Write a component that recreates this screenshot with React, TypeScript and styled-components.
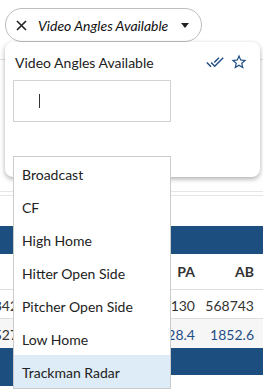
import styled, {createGlobalStyle} from "styled-components";

const GlobalStyle = createGlobalStyle`
  html, body {
    margin: 0;
    padding: 0;
    background: #fff;
  }
  body {
    font-family: Lato, "Noto Sans", sans-serif;
    color: #222;
  }
`

const navy = "#1d4e80"
const linkBlue = "#1f4e86"

const Page = styled.div`
  position: relative;
  width: 263px;
  height: 389px;
  overflow: hidden;
`

const Toolbar = styled.div`
  height: 60px;
  border-bottom: 1px solid #e3e3e3;
  padding: 8px 0 0 5px;
  box-sizing: border-box;
`

const Chip = styled.div`
  display: inline-flex;
  align-items: center;
  box-sizing: border-box;
  height: 34px;
  width: 197px;
  padding: 0 12px 0 10px;
  border: 1px solid #bdbdbd;
  border-radius: 17px;
  background: #fff;
`

const ChipLabel = styled.span`
  font-style: italic;
  font-size: 14px;
  margin-left: 11px;
  flex: 1;
  white-space: nowrap;
  color: #111;
`

const Caret = styled.span`
  width: 0;
  height: 0;
  border-left: 4px solid transparent;
  border-right: 4px solid transparent;
  border-top: 5px solid #222;
`

const DoubleRule = styled.div`
  margin-top: 131px;
  height: 3px;
  border-top: 1px solid #e6e6e6;
  border-bottom: 1px solid #e6e6e6;
`

const Table = styled.div`
  margin-top: 30px;
  margin-left: -20px;
  display: grid;
  grid-template-columns: 45px 1fr 60px 61px;
  font-size: 14px;
  color: #333;
`

const Band = styled.div<{ h: number }>`
  grid-column: 1 / -1;
  height: ${p => p.h}px;
  background: ${navy};
`

const Cell = styled.div<{ head?: boolean; shade?: boolean; link?: boolean; last?: boolean }>`
  height: ${p => (p.head ? 36 : 29)}px;
  display: flex;
  align-items: center;
  justify-content: flex-end;
  padding-right: ${p => (p.last ? 9 : 7)}px;
  padding-top: ${p => (p.head ? 0 : 2)}px;
  box-sizing: border-box;
  white-space: nowrap;
  font-weight: ${p => (p.head ? 700 : 400)};
  color: ${p => (p.link ? linkBlue : "#333")};
  background: ${p => (p.shade ? "#f6f6f6" : "transparent")};
  border-bottom: ${p => (p.shade ? "none" : "1px solid #dedede")};
`

const Tail = styled.div`
  height: 11px;
  background: ${navy};
`

const Popover = styled.div`
  position: absolute;
  top: 42px;
  left: 5px;
  width: 255px;
  height: 135px;
  box-sizing: border-box;
  padding: 11px 12px 0 8px;
  background: #fff;
  border-radius: 8px;
  box-shadow: 0 2px 5px rgba(0, 0, 0, 0.32);
  z-index: 2;
`

const PopHeader = styled.div`
  display: flex;
  align-items: center;
  height: 18px;
  padding-left: 2px;
`

const PopTitle = styled.span`
  flex: 1;
  font-size: 14px;
  color: #222;
`

const IconRow = styled.div`
  display: flex;
  gap: 6px;
`

const SearchBox = styled.div`
  margin-top: 9px;
  width: 158px;
  height: 42px;
  box-sizing: border-box;
  border: 1px solid #d2d2d2;
  padding: 13px 0 0 25px;
`

const TextCursor = styled.span`
  display: block;
  width: 1px;
  height: 14px;
  background: #333;
`

const ListBox = styled.ul`
  position: absolute;
  top: 156px;
  left: 13px;
  width: 158px;
  box-sizing: border-box;
  margin: 0;
  padding: 0;
  list-style: none;
  background: #fff;
  border: 1px solid #cbcbcb;
  z-index: 3;
`

const Option = styled.li<{ active?: boolean }>`
  height: 33px;
  display: flex;
  align-items: center;
  padding-left: 8px;
  padding-top: 1px;
  box-sizing: border-box;
  font-size: 14px;
  color: #222;
  white-space: nowrap;
  background: ${p => (p.active ? "#ddecf7" : "#fff")};
`

const CloseIcon = () =>
    <svg width="11" height="11" viewBox="0 0 11 11">
        <path d="M1 1L10 10M10 1L1 10" stroke="#222" strokeWidth="1.6" fill="none"/>
    </svg>

const DoneAllIcon = () =>
    <svg width="18" height="18" viewBox="0 0 24 24" fill={linkBlue}>
        <path d="M18 7l-1.41-1.41-6.34 6.34 1.41 1.41L18 7zm4.24-1.41L11.66 16.17 7.48 12l-1.41 1.41L11.66 19l12-12-1.42-1.41zM.41 13.41L6 19l1.41-1.41L1.830 12 .41 13.41z"/>
    </svg>

const StarIcon = () =>
    <svg width="18" height="18" viewBox="0 0 24 24" fill={linkBlue}>
        <path d="M22 9.24l-7.19-.62L12 2 9.19 8.63 2 9.24l5.46 4.730L5.82 21 12 17.27 18.18 21l-1.63-7.03L22 9.24zM12 15.4l-3.76 2.27 1-4.28-3.32-2.88 4.38-.38L12 6.1l1.71 4.04 4.38.38-3.32 2.88 1 4.28L12 15.4z"/>
    </svg>

const angles = [
    "Broadcast",
    "CF",
    "High Home",
    "Hitter Open Side",
    "Pitcher Open Side",
    "Low Home",
    "Trackman Radar",
]

const rows = [
    {first: "1342", pa: "130", ab: "568743", shade: false, link: false},
    {first: "1527", pa: "28.4", ab: "1852.6", shade: true, link: true},
]

const App = () => {
    return <Page>
        <GlobalStyle/>
        <Toolbar>
            <Chip>
                <CloseIcon/>
                <ChipLabel>Video Angles Available</ChipLabel>
                <Caret/>
            </Chip>
        </Toolbar>
        <DoubleRule/>
        <Table>
            <Band h={28}/>
            <Cell head/>
            <Cell head/>
            <Cell head>PA</Cell>
            <Cell head last>AB</Cell>
            {rows.map((r, i) => [
                <Cell key={i + "a"} shade={r.shade}>{r.first}</Cell>,
                <Cell key={i + "b"} shade={r.shade}/>,
                <Cell key={i + "c"} shade={r.shade} link={r.link}>{r.pa}</Cell>,
                <Cell key={i + "d"} shade={r.shade} link={r.link} last>{r.ab}</Cell>,
            ])}
            <Band h={27}/>
            <Tail/>
        </Table>

        <Popover>
            <PopHeader>
                <PopTitle>Video Angles Available</PopTitle>
                <IconRow>
                    <DoneAllIcon/>
                    <StarIcon/>
                </IconRow>
            </PopHeader>
            <SearchBox>
                <TextCursor/>
            </SearchBox>
        </Popover>

        <ListBox>
            {angles.map(a =>
                <Option key={a} active={a === "Trackman Radar"}>{a}</Option>)}
        </ListBox>
    </Page>
}

export default App
